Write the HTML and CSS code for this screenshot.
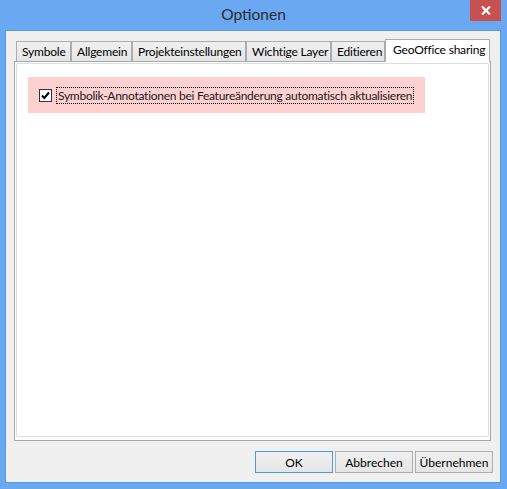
FILE: index.html
```html
<!DOCTYPE html>
<html lang="de">
<head>
<meta charset="utf-8">
<title>Optionen</title>
<link rel="stylesheet" href="styles.css">
</head>
<body>
<div class="window">
  <div class="titlebar">
    <span class="title">Optionen</span>
    <button class="close" aria-label="Schließen">
      <svg width="10" height="9" viewBox="0 0 10 9"><path d="M1 0.5 L9 8.5 M9 0.5 L1 8.5" stroke="#fff" stroke-width="2.2" fill="none"/></svg>
    </button>
  </div>
  <div class="client">
    <div class="tabs">
      <div class="tab tab-symbole">Symbole</div>
      <div class="tab tab-allgemein">Allgemein</div>
      <div class="tab tab-projekt">Projekteinstellungen</div>
      <div class="tab tab-layer">Wichtige Layer</div>
      <div class="tab tab-edit">Editieren</div>
      <div class="tab tab-geo active">GeoOffice sharing</div>
    </div>
    <div class="panel">
      <div class="panel-inner">
        <div class="highlight">
          <label class="check">
            <span class="box">
              <svg width="11" height="11" viewBox="0 0 11 11"><path d="M2 5.5 L4.3 8 L9 2.5" stroke="#000" stroke-width="2" fill="none"/></svg>
            </span>
            <span class="label">Symbolik-Annotationen bei Featureänderung automatisch aktualisieren</span>
          </label>
        </div>
      </div>
    </div>
    <div class="buttons">
      <button class="btn btn-default">OK</button>
      <button class="btn">Abbrechen</button>
      <button class="btn">Übernehmen</button>
    </div>
  </div>
</div>
</body>
</html>
```

FILE: styles.css
```css
* { box-sizing: border-box; }
html, body { margin: 0; padding: 0; }
body {
  background: #6aa9f2;
  font-family: Lato, "Noto Sans", sans-serif;
  font-size: 12px;
  color: #000;
}
.window {
  width: 507px;
  height: 489px;
  background: #6aa9f2;
  display: flex;
  flex-direction: column;
}
.titlebar {
  height: 30px;
  display: grid;
  grid-template-columns: 1fr auto 1fr;
  align-items: start;
}
.title {
  grid-column: 2;
  font-size: 15.5px;
  color: #2b2b2b;
  line-height: 29px;
}
.close {
  grid-column: 3;
  justify-self: end;
  margin-right: 6px;
  width: 31px;
  height: 21px;
  border: 0;
  padding: 0;
  background: #c75050;
  display: flex;
  align-items: center;
  justify-content: center;
}
.client {
  flex: 1;
  margin: 0 6px 6px 5px;
  border: 1px solid #5c98dd;
  background: #f0f0f0;
  padding: 8px 7px 9px 8px;
  display: flex;
  flex-direction: column;
}
.tabs {
  display: flex;
  align-items: flex-end;
  height: 22px;
  padding-left: 2px;
  position: relative;
  z-index: 1;
}
.tab {
  height: 20px;
  border: 1px solid #acacac;
  border-bottom: 0;
  background: linear-gradient(#f0f0f0, #e5e5e5);
  line-height: 19px;
  padding-left: 5px;
  white-space: nowrap;
  letter-spacing: -0.2px;
  color: #000;
}
.tab-symbole { width: 55px; }
.tab-allgemein { width: 61px; }
.tab-projekt { width: 114px; }
.tab-layer { width: 85px; }
.tab-edit { width: 54px; }
.tab.active {
  width: 105px;
  height: 23px;
  margin-bottom: -1px;
  background: #fff;
  padding-left: 7px;
  line-height: 19px;
}
.panel {
  flex: 1;
  margin-right: 2px;
  border: 1px solid #a7a7a7;
  background: #fff;
  padding: 1px 1px 3px 1px;
  display: flex;
}
.panel-inner {
  flex: 1;
  border: 1px solid #d8dee5;
  border-radius: 2px;
  padding: 13px 0 0 11px;
}
.highlight {
  width: 397px;
  height: 36px;
  background: #ffd0d0;
  padding-left: 11px;
  display: flex;
  align-items: center;
}
.check {
  display: flex;
  align-items: center;
  gap: 4px;
  margin-top: 1px;
}
.box {
  width: 13px;
  height: 13px;
  border: 1px solid #333;
  background: #fff;
  display: flex;
  align-items: center;
  justify-content: center;
}
.label {
  border: 1px dotted #000;
  padding: 0 1px;
  line-height: 15px;
  white-space: nowrap;
  letter-spacing: -0.27px;
  color: #1a1a1a;
}
.buttons {
  margin-top: 10px;
  display: flex;
  justify-content: flex-end;
  gap: 2px;
}
.btn {
  width: 78px;
  height: 22px;
  border: 1px solid #adadad;
  background: linear-gradient(#f0f0f0, #e5e5e5);
  font-family: inherit;
  font-size: 12px;
  color: #000;
  padding: 0;
}
.btn-default {
  border-color: #4e98e6;
}
```
